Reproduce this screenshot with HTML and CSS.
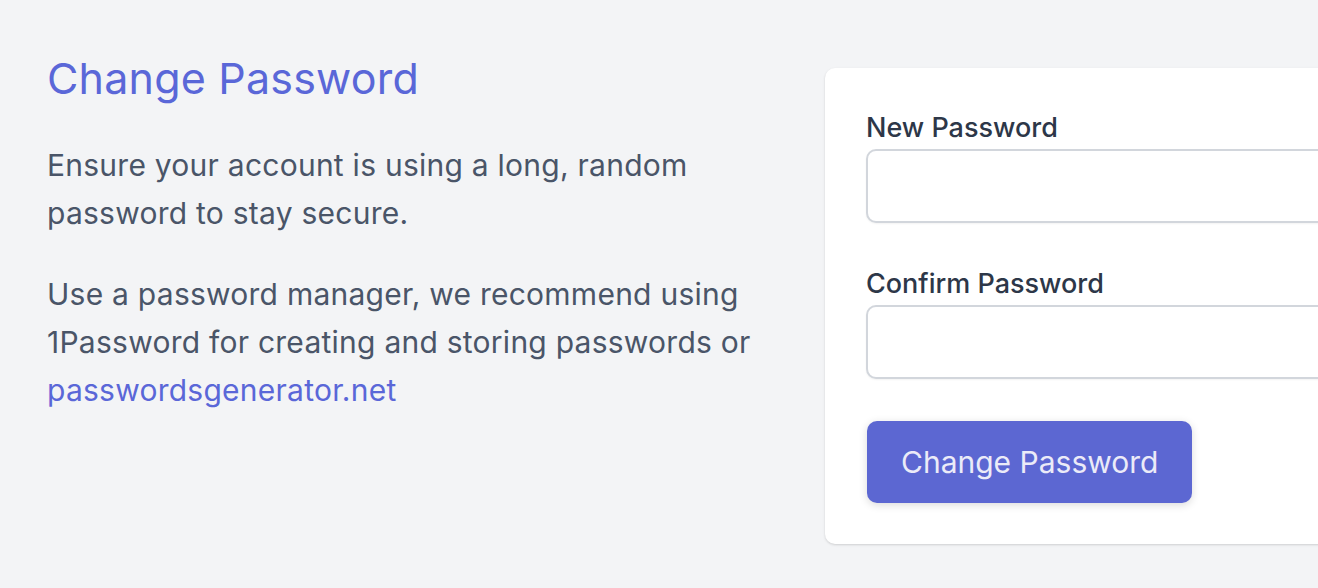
FILE: index.html
```html
<!DOCTYPE html>
<html lang="en">
<head>
<meta charset="utf-8">
<title>Change Password</title>
<link rel="stylesheet" href="styles.css">
</head>
<body>
<div class="page">
  <section class="intro">
    <h1 class="title">Change Password</h1>
    <p class="text">Ensure your account is using a long, random password to stay secure.</p>
    <p class="text">Use a password manager, we recommend using 1Password for creating and storing passwords or <a class="link" href="#">passwordsgenerator.net</a></p>
  </section>
  <form class="card">
    <div class="field">
      <label class="label" for="np">New Password</label>
      <input class="input" id="np" type="password">
    </div>
    <div class="field">
      <label class="label" for="cp">Confirm Password</label>
      <input class="input" id="cp" type="password">
    </div>
    <div class="actions">
      <button class="button" type="button">Change Password</button>
    </div>
  </form>
</div>
</body>
</html>
```
FILE: styles.css
```css
html, body {
  margin: 0;
  padding: 0;
  background: #f3f4f6;
  overflow: hidden;
}
body {
  font-family: Inter, "Noto Sans", sans-serif;
}
.page {
  display: flex;
  align-items: flex-start;
  padding: 50px 0 0 47px;
  height: 588px;
  box-sizing: border-box;
}
.intro {
  width: 778px;
  flex: none;
}
.title {
  margin: 0;
  font-size: 43px;
  font-weight: 400;
  line-height: 56px;
  letter-spacing: 0.2px;
  color: #5a67d8;
}
.text {
  margin: 35px 0 0;
  font-size: 30px;
  line-height: 48px;
  letter-spacing: 0.25px;
  color: #4a5568;
  max-width: 720px;
}
.text + .text {
  margin-top: 33px;
}
.link {
  color: #5a67d8;
  text-decoration: none;
}
.card {
  margin-top: 18px;
  flex: none;
  width: 600px;
  box-sizing: border-box;
  background: #fff;
  border-radius: 10px 0 0 10px;
  box-shadow: 0 1px 3px rgba(0,0,0,0.1), 0 1px 2px rgba(0,0,0,0.06);
  padding: 43px 0 41px 41px;
}
.field {
  display: flex;
  flex-direction: column;
  gap: 4px;
  margin-bottom: 44px;
}
.field + .field {
  margin-bottom: 42px;
}
.label {
  font-size: 27px;
  font-weight: 500;
  line-height: 34px;
  color: #2d3748;
}
.input {
  box-sizing: border-box;
  height: 74px;
  width: 600px;
  border: 2px solid #d2d6dc;
  border-radius: 10px;
  box-shadow: 0 1px 2px rgba(0,0,0,0.05);
  background: #fff;
}
.actions {
  display: flex;
}
.button {
  font-family: inherit;
  font-size: 30px;
  font-weight: 400;
  color: #ebebf8;
  background: #5c67d2;
  border: none;
  border-radius: 10px;
  height: 82px;
  padding: 0 34px;
  box-shadow: 0 2px 8px rgba(0,0,0,0.15);
  margin-left: 1px;
}
```
